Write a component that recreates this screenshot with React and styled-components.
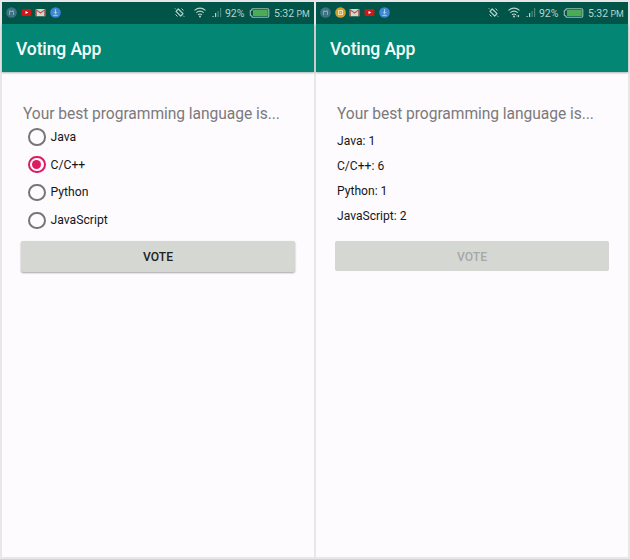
import React, { useState } from "react";
import styled, { createGlobalStyle } from "styled-components";

const GlobalStyle = createGlobalStyle`
  * { box-sizing: border-box; }
  body { margin: 0; background: #e8e6e8; font-family: Roboto, sans-serif; }
`;

const Screens = styled.main`
  display: grid;
  grid-template-columns: 312px 312px;
  gap: 2px;
  width: 630px;
  height: 559px;
  padding: 2px;
`;

const Phone = styled.section`
  display: flex;
  flex-direction: column;
  height: 555px;
  background: #fdfbfe;
`;

const StatusBar = styled.div`
  display: flex;
  justify-content: space-between;
  height: 21.5px;
  padding: 0 5px 0 4px;
  background: #015448;
  color: #b9d3cd;
`;

const Notifications = styled.div`
  display: flex;
  align-items: center;
  gap: 3.7px;
  svg { display: block; width: 11px; height: 11px; }
`;

const Indicators = styled.div`
  display: flex;
  align-items: center;
  height: 21.5px;
  svg { display: block; flex: none; }
`;

const StatusText = styled.span`
  width: ${(p) => p.$width}px;
  margin-left: ${(p) => p.$gap}px;
  padding-top: 1.5px;
  font-size: 10.5px;
  letter-spacing: -0.05px;
  line-height: 14px;
  white-space: nowrap;
  small { font-size: 8.8px; }
`;

const RotateIcon = styled.svg`margin-right: 9px;`;
const WifiIcon = styled.svg`margin-right: 6px;`;
const BatteryIcon = styled.svg`margin-left: 4px;`;

const AppBar = styled.header`
  display: flex;
  align-items: center;
  height: 48.5px;
  padding: 2px 14px 0;
  background: #038674;
  box-shadow: 0 1px 2px rgba(0, 0, 0, 0.3);
`;

const Title = styled.h1`
  margin: 0;
  color: #f5fffc;
  font-size: 17.5px;
  letter-spacing: -0.1px;
  line-height: 22px;
  font-weight: 500;
`;

const Content = styled.div`
  padding: 32px 19px 0;
`;

const Question = styled.p`
  margin: 0 0 0 2px;
  height: 19px;
  color: #7b797b;
  font-size: 15.6px;
  letter-spacing: -0.05px;
  line-height: 20px;
  white-space: nowrap;
`;

const Answers = styled.div`
  height: 117.5px;
`;

const Option = styled.button`
  display: flex;
  align-items: center;
  gap: 5px;
  height: 27.8px;
  padding: 0 0 0 7px;
  border: 0;
  background: none;
  color: #171617;
  font: 12.2px/16px Roboto, sans-serif;
`;

const Radio = styled.span`
  display: grid;
  place-items: center;
  width: 17.5px;
  height: 17.5px;
  border: 2px solid ${(p) => (p.$checked ? "#dc1b60" : "#777577")};
  border-radius: 50%;
  &::after {
    content: "";
    width: 9px;
    height: 9px;
    border-radius: 50%;
    background: ${(p) => (p.$checked ? "#dc1b60" : "transparent")};
  }
`;

const Result = styled.p`
  margin: 0 0 0 2px;
  height: 25.1px;
  padding-top: 9.5px;
  color: #171617;
  font-size: 12.1px;
  line-height: 16px;
`;

const VoteButton = styled.button`
  display: block;
  width: 274px;
  height: ${(p) => (p.disabled ? 30.5 : 31)}px;
  padding: ${(p) => (p.disabled ? 2 : 1)}px 0 0;
  border: 0;
  border-radius: 2px;
  background: #d5d7d3;
  box-shadow: ${(p) => (p.disabled ? "none" : "0 1px 2px rgba(0,0,0,.35)")};
  color: ${(p) => (p.disabled ? "#a6a8a5" : "#20221f")};
  font: 500 12.1px/16px Roboto, sans-serif;
`;

function NoticeIcon({ kind }) {
  if (kind === "video") {
    return (
      <svg viewBox="0 0 11 11">
        <rect x=".6" y="2" width="9.8" height="7" rx="1.2" fill="#cf1717" />
        <path d="M4.5 4 7.3 5.5 4.5 7Z" fill="#fff" />
      </svg>
    );
  }
  if (kind === "mail") {
    return (
      <svg viewBox="0 0 11 11">
        <rect x=".7" y="2" width="9.6" height="7.3" rx=".6" fill="#d0d8cf" />
        <path d="M1.3 9.3V2.8L5.5 6l4.2-3.2v6.5" fill="none" stroke="#b65a50" strokeWidth="1.1" />
      </svg>
    );
  }
  if (kind === "download") {
    return (
      <svg viewBox="0 0 11 11">
        <circle cx="5.5" cy="5.5" r="5.3" fill="#3c87d4" />
        <path d="M5.5 2.2v4M3.9 5l1.6 1.6L7.1 5M3.4 8.3h4.2" fill="none" stroke="#b9d9ee" strokeWidth=".9" />
      </svg>
    );
  }
  if (kind === "coin") {
    return (
      <svg viewBox="0 0 11 11">
        <circle cx="5.5" cy="5.5" r="5.3" fill="#d0a02d" />
        <rect x="3.5" y="3.5" width="4" height="4" fill="#d2ab48" stroke="#efdda9" />
        <rect x="5" y="5" width="1" height="1" fill="#efdda9" />
      </svg>
    );
  }
  return (
    <svg viewBox="0 0 11 11">
      <circle cx="5.5" cy="5.5" r="5.3" fill="#3d7383" />
      <path d="M3.5 8V4.5h4V8M4 3v1.5M7 3v1.5" fill="none" stroke="#8eb0b5" strokeWidth=".9" />
    </svg>
  );
}

function PhoneFrame({ notices, wifiActive, children }) {
  return (
    <Phone>
      <StatusBar>
        <Notifications>
          {notices.map((kind) => <NoticeIcon key={kind} kind={kind} />)}
        </Notifications>
        <Indicators>
          <RotateIcon width="11" height="11" viewBox="0 0 11 11" fill="none" stroke="currentColor">
            <path d="M4.3 2 9 6.7 6.7 9 2 4.3Z" strokeWidth="1.2" strokeLinejoin="round" />
            <path d="M7.5 1.5 9.5 3.5M1.5 7.5 3.5 9.5M.8 1.3l1 1M9.2 8.7l1 1" />
          </RotateIcon>
          <WifiIcon width="12" height="11" viewBox="0 0 12 11" fill="none" stroke="currentColor" strokeWidth="1.1">
            <path d="M.5 3.4Q6-1.2 11.5 3.4M2.3 5.6Q6 2.6 9.7 5.6M4 7.7q2-1.5 4 0" />
            <circle cx="6" cy="9.5" r="1" fill="currentColor" stroke="none" />
            {wifiActive && <path d="M10.5 8v2M8.5 9h1" />}
          </WifiIcon>
          <svg width="10" height="11" viewBox="0 0 10 11">
            <path d="M.5 9h1.2v1H.5ZM3 6h1.2v4H3Z" fill="#b9d3cd" />
            <path d="M5.5 4h1.2v6H5.5ZM8 1h1.2v9H8Z" fill="#4b897e" />
          </svg>
          <StatusText $width={20} $gap={3}>92%</StatusText>
          <BatteryIcon width="21" height="10" viewBox="0 0 20 10">
            <path d="M3.5.7h14.6q1.2 0 1.2 1.2v6.2q0 1.2-1.2 1.2H3.5q-1.2 0-1.2-1.2l-1.5-1V2.9l1.5-1Q2.3.7 3.5.7Z" fill="none" stroke="#9fbbb4" strokeWidth="1.1" />
            <rect x="3.5" y="2" width="14.7" height="6" fill="#4cab55" />
          </BatteryIcon>
          <StatusText $width={35} $gap={4}>5:32 <small>PM</small></StatusText>
        </Indicators>
      </StatusBar>
      <AppBar><Title>Voting App</Title></AppBar>
      <Content>
        <Question>Your best programming language is...</Question>
        {children}
      </Content>
    </Phone>
  );
}

const votes = [
  ["Java", 1],
  ["C/C++", 6],
  ["Python", 1],
  ["JavaScript", 2],
];

export default function App() {
  const [choice, setChoice] = useState("C/C++");
  return (
    <>
      <GlobalStyle />
      <Screens>
        <PhoneFrame notices={["android", "video", "mail", "download"]}>
          <Answers role="radiogroup">
            {votes.map(([name]) => (
              <Option key={name} role="radio" aria-checked={choice === name} onClick={() => setChoice(name)}>
                <Radio $checked={choice === name} />
                {name}
              </Option>
            ))}
          </Answers>
          <VoteButton>VOTE</VoteButton>
        </PhoneFrame>
        <PhoneFrame notices={["android", "coin", "mail", "video", "download"]} wifiActive>
          <Answers>
            {votes.map(([name, count]) => <Result key={name}>{name}: {count}</Result>)}
          </Answers>
          <VoteButton disabled>VOTE</VoteButton>
        </PhoneFrame>
      </Screens>
    </>
  );
}
